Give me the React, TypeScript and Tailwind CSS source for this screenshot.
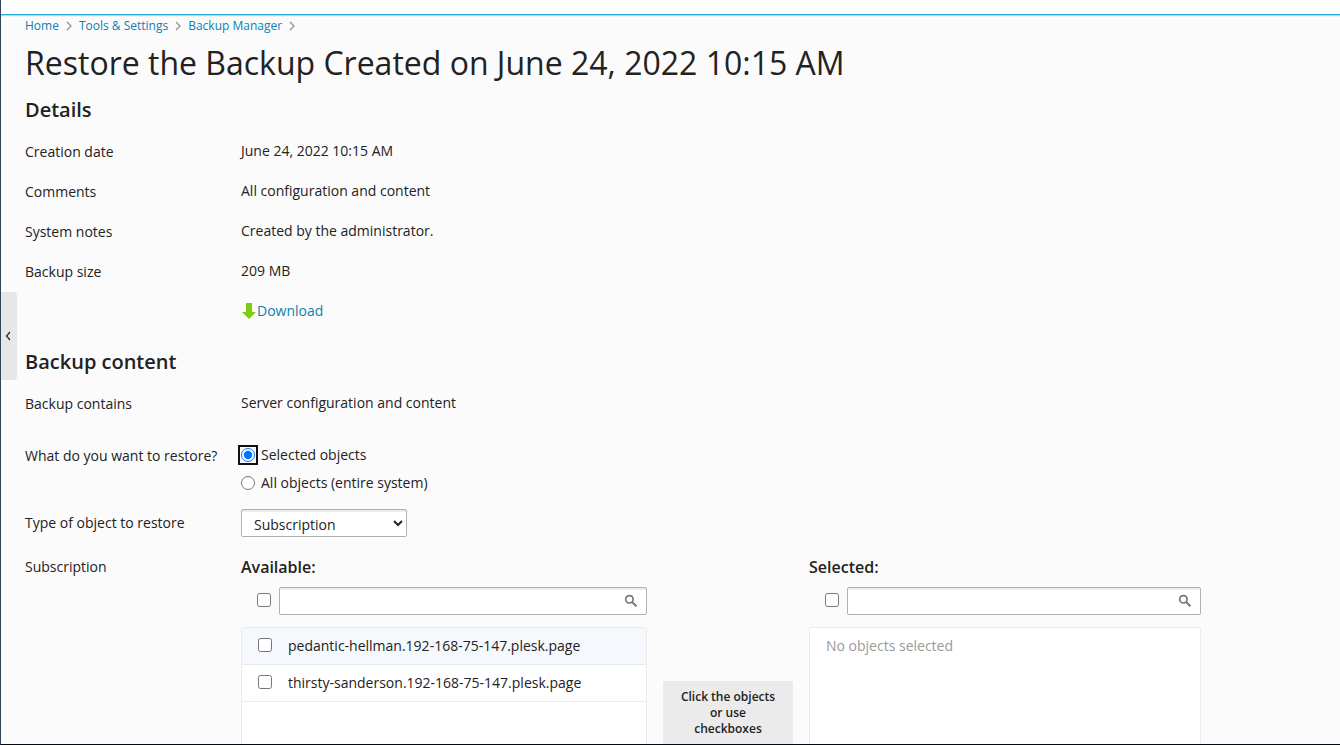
import { useState, type ReactNode } from 'react';

function Chevron() {
  return (
    <svg className="h-3 w-3 text-[#909090]" viewBox="0 0 12 12" fill="none" stroke="currentColor" strokeWidth="1.2" aria-hidden="true">
      <path d="M4 2 8 6 4 10" />
    </svg>
  );
}

function SearchIcon() {
  return (
    <svg className="h-4 w-4" viewBox="0 0 16 16" fill="none" stroke="currentColor" aria-hidden="true">
      <circle cx="6.4" cy="6.3" r="3.7" strokeWidth="1.7" />
      <path d="M9.2 9.1 13.4 13.3" strokeWidth="2" />
    </svg>
  );
}

function Row({ label, children }: { label?: string; children: ReactNode }) {
  return (
    <div className="flex">
      <div className="w-[216px] shrink-0 leading-[22px]">{label}</div>
      <div className="min-w-0 flex-1 leading-5">{children}</div>
    </div>
  );
}

function SearchRow({ name }: { name: string }) {
  return (
    <div className="mt-2.5 flex items-center pl-4">
      <input type="checkbox" aria-label={`Select all ${name}`} className="mr-2 mb-0.5 h-[14px] w-[14px] shrink-0" />
      <div className="relative min-w-0 flex-1">
        <input
          type="text"
          aria-label={`Search ${name}`}
          className="block h-7 w-full rounded-xs border border-[#b0b0b0] bg-white pr-8 pl-3 shadow-[inset_0_2px_0_#ededed] outline-none"
        />
        <button type="button" aria-label={`Find ${name}`} className="absolute top-1.5 right-2 text-[#757575]">
          <SearchIcon />
        </button>
      </div>
    </div>
  );
}

const crumbs = ['Home', 'Tools & Settings', 'Backup Manager'];
const objects = ['pedantic-hellman.192-168-75-147.plesk.page', 'thirsty-sanderson.192-168-75-147.plesk.page'];

export default function App() {
  const [mode, setMode] = useState('selected');

  return (
    <div className="relative flex h-screen flex-col overflow-hidden border-b border-l border-b-[#050a14] border-l-[#34435c] bg-[#fbfbfb] font-['Open_Sans',sans-serif] text-sm text-[#222]">
      <header className="h-[15px] shrink-0 border-b border-[#28aade] bg-white shadow-[0_1px_1px_#cfcfcf]" />
      <button
        type="button"
        aria-label="Collapse sidebar"
        className="absolute top-[292px] left-0 flex h-[88px] w-4 items-center justify-center rounded-r-sm bg-[#e7e7e7] pr-0.5 text-[#222]"
      >
        <svg className="h-3 w-3" viewBox="0 0 12 12" fill="none" stroke="currentColor" strokeWidth="1.2" aria-hidden="true">
          <path d="M8 2 4.5 6 8 10" />
        </svg>
      </button>
      <main className="min-h-0 flex-1 overflow-hidden px-6">
        <nav aria-label="Breadcrumb" className="flex h-[22px] items-center text-xs text-[#0d7fb0]">
          {crumbs.map((crumb) => (
            <span key={crumb} className="flex items-center">
              <a href="#">{crumb}</a>
              <span className="mx-1">
                <Chevron />
              </span>
            </span>
          ))}
        </nav>
        <h1 className="mt-1.5 text-[32px] leading-10">Restore the Backup Created on June 24, 2022 10:15 AM</h1>

        <section>
          <h2 className="mt-[15px] text-xl leading-6 font-semibold">Details</h2>
          <div className="mt-[19px] flex flex-col gap-[18px]">
            <Row label="Creation date">June 24, 2022 10:15 AM</Row>
            <Row label="Comments">All configuration and content</Row>
            <Row label="System notes">Created by the administrator.</Row>
            <Row label="Backup size">209 MB</Row>
            <Row>
              <a href="#" className="flex items-center text-[#0d7fb0]">
                <svg className="h-5 w-4" viewBox="0 0 16 20" fill="#7fcb10" aria-hidden="true">
                  <path d="M5 2h6v9h4l-7 7-7-7h4z" />
                </svg>
                Download
              </a>
            </Row>
          </div>
        </section>

        <section>
          <h2 className="mt-[29px] text-xl leading-6 font-semibold">Backup content</h2>
          <div className="mt-[19px] flex flex-col">
            <Row label="Backup contains">Server configuration and content</Row>
            <div className="mt-[30px]">
              <Row label="What do you want to restore?">
                <div role="radiogroup" aria-label="What do you want to restore?" className="flex flex-col gap-2">
                  <label className="flex items-center gap-1.5">
                    <input
                      type="radio"
                      name="mode"
                      checked={mode === 'selected'}
                      onChange={() => setMode('selected')}
                      className="h-[14px] w-[14px] rounded-xs outline-2 outline-offset-1 outline-[#101010]"
                    />
                    Selected objects
                  </label>
                  <label className="flex items-center gap-1.5">
                    <input
                      type="radio"
                      name="mode"
                      checked={mode === 'all'}
                      onChange={() => setMode('all')}
                      className="h-[14px] w-[14px]"
                    />
                    All objects (entire system)
                  </label>
                </div>
              </Row>
            </div>
            <div className="mt-4 flex items-center">
              <label htmlFor="object-type" className="w-[216px] shrink-0 leading-5">
                Type of object to restore
              </label>
              <select
                id="object-type"
                className="h-7 w-[166px] rounded-xs border border-[#b0b0b0] bg-white pt-0.5 pl-2 shadow-[inset_0_2px_0_#ededed]"
              >
                <option>Subscription</option>
              </select>
            </div>
            <div className="mt-5 flex">
              <div className="w-[216px] shrink-0 leading-5">Subscription</div>
              <div className="grid max-w-[960px] flex-1 grid-cols-[406fr_130px_392fr] gap-4">
                <div>
                  <h3 className="text-base leading-5 font-semibold">Available:</h3>
                  <SearchRow name="available objects" />
                  <ul className="mt-3 h-[172px] rounded-xs border border-[#ebebeb] bg-white">
                    {objects.map((name) => (
                      <li key={name} className="border-b border-[#ebebeb] first:bg-[#f5f9fd]">
                        <label className="flex h-9 items-center gap-4 pl-4">
                          <input type="checkbox" className="mb-0.5 h-[14px] w-[14px]" />
                          {name}
                        </label>
                      </li>
                    ))}
                  </ul>
                </div>
                <div className="flex flex-col justify-center pt-[70px]">
                  <div className="rounded-xs bg-[#ebebeb] px-4 py-2 text-center text-xs leading-4 font-semibold">
                    Click the objects or use checkboxes
                  </div>
                </div>
                <div>
                  <h3 className="text-base leading-5 font-semibold">Selected:</h3>
                  <SearchRow name="selected objects" />
                  <div className="mt-3 h-[172px] rounded-xs border border-[#ebebeb] bg-white px-4 py-2 leading-5 text-[#999]">
                    No objects selected
                  </div>
                </div>
              </div>
            </div>
          </div>
        </section>
      </main>
    </div>
  );
}
